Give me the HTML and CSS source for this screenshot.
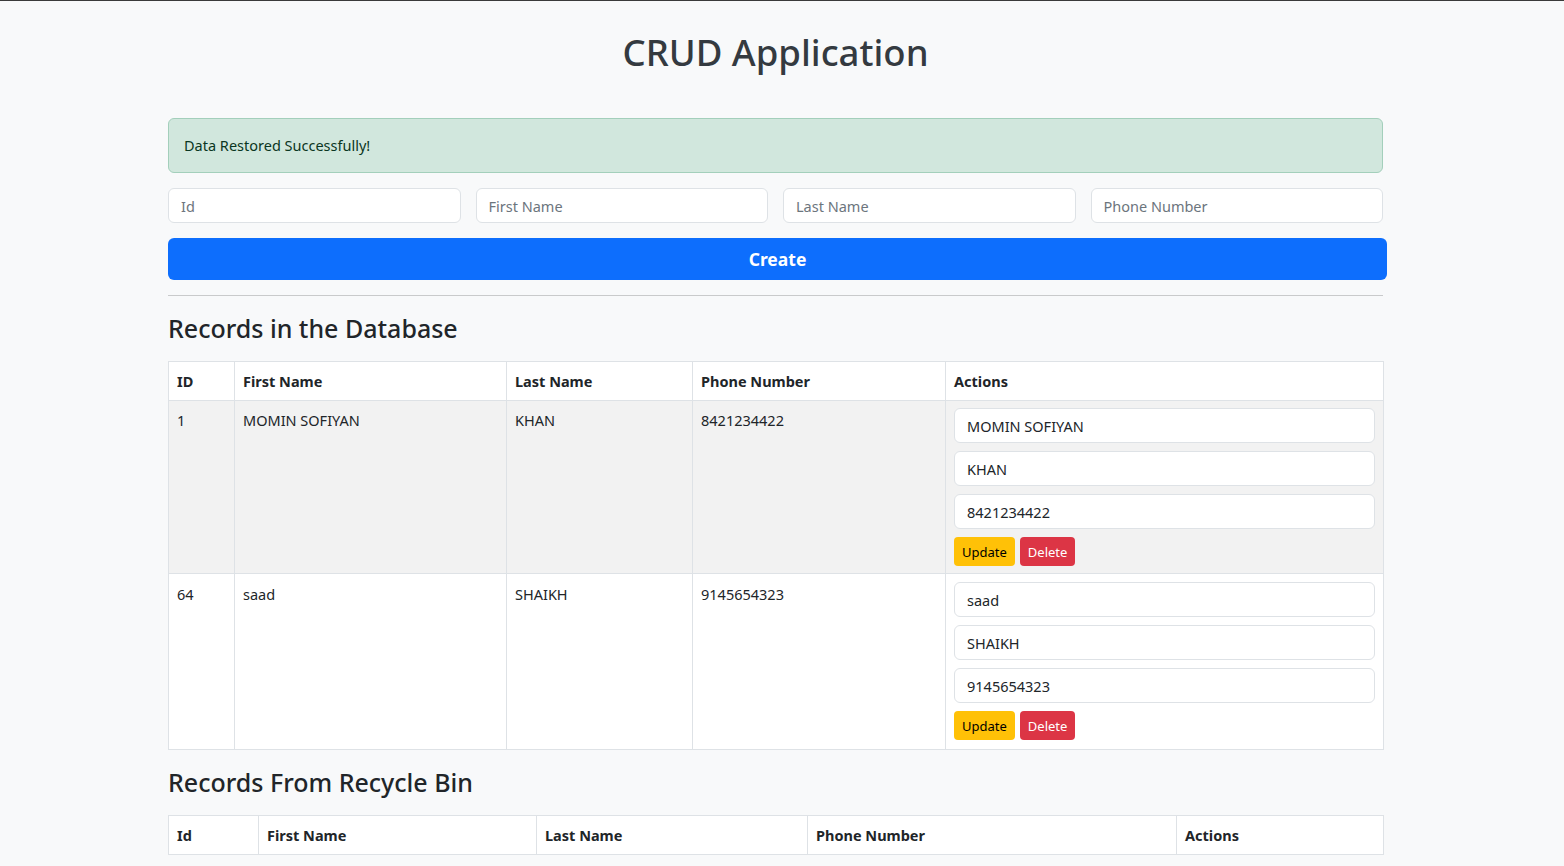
FILE: index.html
```html
<!DOCTYPE html>
<html lang="en">
<head>
<meta charset="utf-8">
<title>CRUD Application</title>
<link rel="stylesheet" href="styles.css">
</head>
<body>
<div class="topline"></div>
<main class="container">
  <h1 class="title">CRUD Application</h1>
  <div class="alert">Data Restored Successfully!</div>
  <form class="create-form">
    <div class="fields">
      <input class="form-control" type="text" placeholder="Id">
      <input class="form-control" type="text" placeholder="First Name">
      <input class="form-control" type="text" placeholder="Last Name">
      <input class="form-control" type="text" placeholder="Phone Number">
    </div>
    <button type="button" class="btn-create">Create</button>
  </form>
  <hr class="divider">
  <h3 class="section-title">Records in the Database</h3>
  <table class="table records">
    <colgroup>
      <col class="c-id"><col class="c-first"><col class="c-last"><col class="c-phone"><col class="c-actions">
    </colgroup>
    <thead>
      <tr><th>ID</th><th>First Name</th><th>Last Name</th><th>Phone Number</th><th>Actions</th></tr>
    </thead>
    <tbody>
      <tr class="striped">
        <td>1</td><td>MOMIN SOFIYAN</td><td>KHAN</td><td>8421234422</td>
        <td>
          <div class="edit">
            <input class="form-control" type="text" value="MOMIN SOFIYAN">
            <input class="form-control" type="text" value="KHAN">
            <input class="form-control" type="text" value="8421234422">
            <div class="btns">
              <button type="button" class="btn-sm btn-warning">Update</button>
              <button type="button" class="btn-sm btn-danger">Delete</button>
            </div>
          </div>
        </td>
      </tr>
      <tr class="last-row">
        <td>64</td><td>saad</td><td>SHAIKH</td><td>9145654323</td>
        <td>
          <div class="edit">
            <input class="form-control" type="text" value="saad">
            <input class="form-control" type="text" value="SHAIKH">
            <input class="form-control" type="text" value="9145654323">
            <div class="btns">
              <button type="button" class="btn-sm btn-warning">Update</button>
              <button type="button" class="btn-sm btn-danger">Delete</button>
            </div>
          </div>
        </td>
      </tr>
    </tbody>
  </table>
  <h3 class="section-title">Records From Recycle Bin</h3>
  <table class="table recycle">
    <colgroup>
      <col class="r-id"><col class="r-first"><col class="r-last"><col class="r-phone"><col class="r-actions">
    </colgroup>
    <thead>
      <tr><th>Id</th><th>First Name</th><th>Last Name</th><th>Phone Number</th><th>Actions</th></tr>
    </thead>
  </table>
</main>
</body>
</html>
```
FILE: styles.css
```css
* { box-sizing: border-box; }
html, body { margin: 0; padding: 0; }
body {
  background: #f8f9fa;
  color: #212529;
  font-family: "Noto Sans", "Open Sans", sans-serif;
  font-size: 14.5px;
  line-height: 1.5;
}
.topline { height: 1px; background: #3a3a3a; }
.container {
  width: 1215px;
  margin: 0 0 0 168px;
  padding-top: 27px;
}
.title {
  margin: 0 0 42px;
  text-align: center;
  font-size: 36.5px;
  font-weight: 500;
  line-height: 48px;
  color: #343a40;
}
.alert {
  background: #d1e7dd;
  border: 1px solid #a3cfbb;
  color: #0a3622;
  border-radius: 6px;
  padding: 0 15px;
  height: 55px;
  display: flex;
  align-items: center;
  margin-bottom: 15px;
}
.create-form { margin: 0; }
.fields {
  display: grid;
  grid-template-columns: repeat(4, 1fr);
  gap: 15px;
  margin-bottom: 15px;
}
.form-control {
  display: block;
  width: 100%;
  height: 35px;
  padding: 0 12px;
  font-family: inherit;
  font-size: 14.5px;
  color: #212529;
  background: #fff;
  border: 1px solid #dee2e6;
  border-radius: 6px;
  outline: none;
}
.form-control::placeholder { color: #6c757d; }
.btn-create {
  display: block;
  width: calc(100% + 4px);
  height: 42px;
  border: 0;
  border-radius: 6px;
  background: #0d6efd;
  color: #fff;
  font-family: inherit;
  font-weight: 700;
  font-size: 17.5px;
  padding: 0;
}
.divider {
  margin: 15px 0 16px;
  border: 0;
  border-top: 1px solid #c9cacb;
  height: 0;
}
.section-title {
  margin: 0 0 16px;
  font-size: 25px;
  font-weight: 500;
  line-height: 33px;
}
.table {
  width: 100%;
  table-layout: fixed;
  border-collapse: collapse;
  background: #fff;
}
.records { margin-bottom: 16px; }
.table th, .table td {
  border: 1px solid #dee2e6;
  padding: 7px 8px;
  text-align: left;
  vertical-align: top;
  line-height: 24px;
}
.table th { font-weight: 700; }
.striped td { background: #f2f2f2; }
.last-row td { padding-top: 8px; padding-bottom: 9px; }
.c-id { width: 66px; }
.c-first { width: 272px; }
.c-last { width: 186px; }
.c-phone { width: 253px; }
.c-actions { width: 438px; }
.r-id { width: 90px; }
.r-first { width: 278px; }
.r-last { width: 271px; }
.r-phone { width: 369px; }
.r-actions { width: 207px; }
.edit {
  display: flex;
  flex-direction: column;
  gap: 8px;
}
.btns { display: flex; gap: 5px; }
.btn-sm {
  height: 29px;
  padding: 0 8px;
  border: 0;
  border-radius: 4px;
  font-family: inherit;
  font-size: 13px;
}
.btn-warning { background: #ffc107; color: #000; }
.btn-danger { background: #dc3545; color: #fff; }
```
